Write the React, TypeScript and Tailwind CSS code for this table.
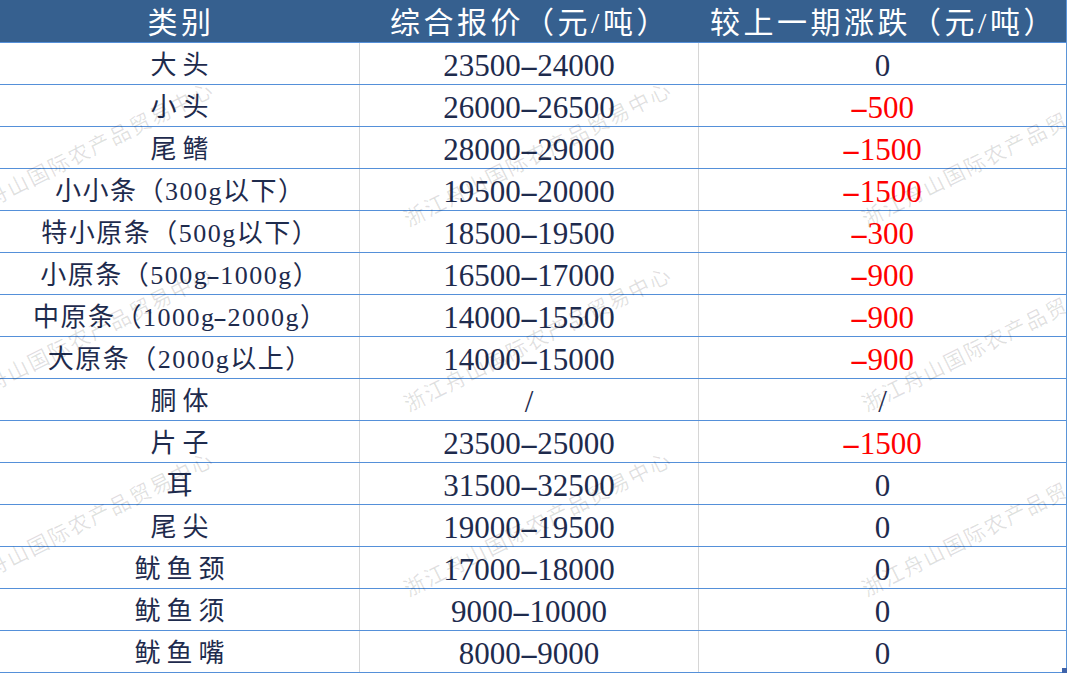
import React from "react";

type Row = { name: string; price: string; change: string; red: boolean; short: boolean };

const rows: Row[] = [
  { name: "大头", price: "23500-24000", change: "0", red: false, short: true },
  { name: "小头", price: "26000-26500", change: "-500", red: true, short: true },
  { name: "尾鳍", price: "28000-29000", change: "-1500", red: true, short: true },
  { name: "小小条（300g以下）", price: "19500-20000", change: "-1500", red: true, short: false },
  { name: "特小原条（500g以下）", price: "18500-19500", change: "-300", red: true, short: false },
  { name: "小原条（500g-1000g）", price: "16500-17000", change: "-900", red: true, short: false },
  { name: "中原条（1000g-2000g）", price: "14000-15500", change: "-900", red: true, short: false },
  { name: "大原条（2000g以上）", price: "14000-15000", change: "-900", red: true, short: false },
  { name: "胴体", price: "/", change: "/", red: false, short: true },
  { name: "片子", price: "23500-25000", change: "-1500", red: true, short: true },
  { name: "耳", price: "31500-32500", change: "0", red: false, short: true },
  { name: "尾尖", price: "19000-19500", change: "0", red: false, short: true },
  { name: "鱿鱼颈", price: "17000-18000", change: "0", red: false, short: true },
  { name: "鱿鱼须", price: "9000-10000", change: "0", red: false, short: true },
  { name: "鱿鱼嘴", price: "8000-9000", change: "0", red: false, short: true },
];

const FONT = "font-['Liberation_Serif','Noto_Sans_CJK_SC',serif]";

const marks: { x: number; y: number }[] = [];
for (const y of [230, 415, 600]) {
  for (const x of [-48, 410, 868]) marks.push({ x, y });
}

function Num({ text }: { text: string }) {
  const parts = text.split("-");
  return (
    <>
      {parts.map((p, i) => (
        <React.Fragment key={i}>
          {i > 0 && <span className="inline-block scale-x-[1.9] mx-[3px]">-</span>}
          {p}
        </React.Fragment>
      ))}
    </>
  );
}

function Name({ text }: { text: string }) {
  const parts = text.split("-");
  return (
    <>
      {parts.map((p, i) => (
        <React.Fragment key={i}>
          {i > 0 && <span className="inline-block scale-x-[1.6] mx-[1px]">-</span>}
          {p}
        </React.Fragment>
      ))}
    </>
  );
}

export default function App() {
  return (
    <div className="relative w-[1068px] h-[673px] bg-white overflow-hidden">
      <div className={`w-[1067px] border-r border-[#5b95d8] ${FONT}`}>
        <div className="grid grid-cols-[359px_339px_368px] h-[43px] bg-[#36608f] border-b border-[#5590d9] text-white text-[30px] tracking-[3.5px] leading-none">
          <div className="flex items-center justify-center pt-[3px] pl-[3px]">类别</div>
          <div className="flex items-center justify-center pt-[3px] pl-[3px]">综合报价（元/吨）</div>
          <div className="flex items-center justify-center pt-[3px] pl-[3px]">较上一期涨跌（元/吨）</div>
        </div>
        <div className="relative">
          {rows.map((r, i) => (
            <div
              key={i}
              className="grid grid-cols-[359px_339px_368px] h-[42px] border-b border-[#5590d9] text-[#1e2b4d] leading-none"
            >
              <div
                className={`flex items-center justify-center pt-[5px] text-[26px] whitespace-nowrap ${
                  r.short ? "tracking-[6px] pl-[6px]" : "tracking-[1.5px] pl-[1.5px]"
                }`}
              >
                <Name text={r.name} />
              </div>
              <div className="flex items-center justify-center pt-[4px] border-l border-[#d6d6d6] text-[31px] whitespace-nowrap">
                <Num text={r.price} />
              </div>
              <div
                className={`flex items-center justify-center pt-[4px] border-l border-[#d6d6d6] text-[31px] whitespace-nowrap ${
                  r.red ? "text-[#ff0000]" : ""
                }`}
              >
                <Num text={r.change} />
              </div>
            </div>
          ))}
          <div className="pointer-events-none absolute inset-0 overflow-hidden">
            {marks.map((m, i) => (
              <div
                key={i}
                className="absolute h-[24px] whitespace-nowrap text-[21px] leading-[24px] tracking-[1.8px] text-[rgba(0,0,0,0.12)] font-['Noto_Sans_CJK_SC',sans-serif] origin-bottom-left -rotate-[26.6deg]"
                style={{ left: m.x, top: m.y - 43 - 24 }}
              >
                浙江舟山国际农产品贸易中心
              </div>
            ))}
          </div>
        </div>
      </div>
      <div className="absolute left-[1062px] top-[668px] w-[5px] h-[5px] bg-[#3f63aa]" />
    </div>
  );
}
